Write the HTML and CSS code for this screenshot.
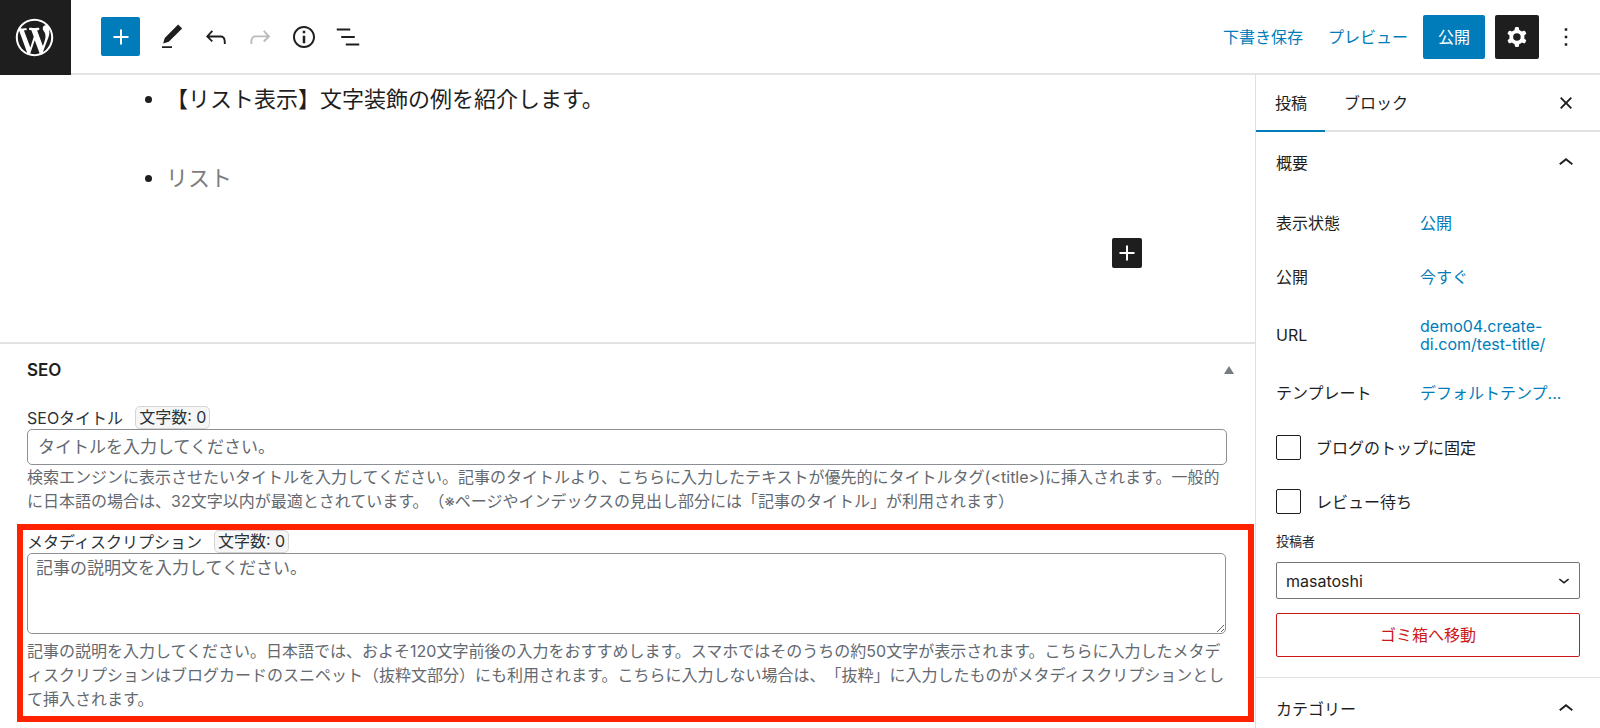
FILE: index.html
```html
<!DOCTYPE html>
<html lang="ja">
<head>
<meta charset="utf-8">
<title>投稿の編集</title>
<link rel="stylesheet" href="styles.css">
</head>
<body>
<div class="app">
  <header class="topbar">
    <a class="logo" href="#" aria-label="WordPress">
      <svg viewBox="-2 -2 24 24"><path d="M20 10c0-5.51-4.49-10-10-10C4.48 0 0 4.49 0 10c0 5.52 4.48 10 10 10 5.51 0 10-4.48 10-10zM7.78 15.37L4.37 6.22c.55-.02 1.17-.08 1.17-.08.5-.06.44-1.13-.06-1.11 0 0-1.45.11-2.37.11-.18 0-.37 0-.58-.01C4.12 2.69 6.87 1.11 10 1.11c2.33 0 4.45.87 6.05 2.34-.68-.11-1.65.39-1.65 1.58 0 .74.45 1.36.9 2.1.35.61.55 1.36.55 2.46 0 1.49-1.4 5-1.4 5l-3.03-8.37c.54-.02.82-.17.82-.17.5-.05.44-1.25-.06-1.22 0 0-1.44.12-2.38.12-.87 0-2.33-.12-2.33-.12-.5-.03-.56 1.2-.06 1.22l.92.08 1.26 3.41zM17.41 10c.24-.64.74-1.87.43-4.25.7 1.29 1.05 2.71 1.05 4.25 0 3.29-1.73 6.24-4.4 7.78.97-2.59 1.94-5.2 2.92-7.78zM6.1 18.09C3.12 16.65 1.11 13.53 1.11 10c0-1.3.23-2.48.72-3.59C3.25 10.3 4.67 14.2 6.1 18.09zm4.03-6.63l2.58 6.98c-.86.29-1.76.45-2.71.45-.79 0-1.57-.11-2.29-.33.81-2.38 1.62-4.74 2.42-7.1z"/></svg>
    </a>
    <div class="tools">
      <button class="add" type="button" aria-label="ブロックを追加"><svg viewBox="0 0 24 24"><path d="M18 11.2h-5.2V6h-1.6v5.2H6v1.6h5.2V18h1.6v-5.2H18z"/></svg></button>
      <button class="tool" type="button" aria-label="ツール"><svg viewBox="0 0 24 24"><path d="M20.1 5.1L16.9 2 6.2 12.7l-1.3 4.4 4.5-1.3L20.1 5.1zM4 20.8h8v-1.5H4v1.5z"/></svg></button>
      <button class="tool" type="button" aria-label="元に戻す"><svg viewBox="0 0 24 24"><path d="M18.3 11.7c-.6-.6-1.4-.9-2.3-.9H6.7l2.9-3.3-1.1-1-4.5 5L8.5 16l1-1-2.7-2.7H16c.5 0 .9.2 1.3.5 1 1 1 3.4 1 4.5v.3h1.5v-.2c0-1.5 0-4.3-1.5-5.7z"/></svg></button>
      <button class="tool" type="button" aria-label="やり直す" disabled><svg viewBox="0 0 24 24"><path d="M15.6 6.5l-1.1 1 2.9 3.3H8c-.9 0-1.7.3-2.3.9-1.4 1.5-1.4 4.2-1.4 5.6v.2h1.5v-.3c0-1.1 0-3.5 1-4.5.3-.3.7-.5 1.3-.5h9.2L14.5 15l1.1 1.1 4.6-4.6-4.6-5z"/></svg></button>
      <button class="tool" type="button" aria-label="詳細"><svg viewBox="0 0 24 24"><path d="M12 3.2c-4.8 0-8.8 3.9-8.8 8.8 0 4.8 3.9 8.8 8.8 8.8 4.8 0 8.8-3.9 8.8-8.8 0-4.8-4-8.8-8.8-8.8zm0 16c-4 0-7.2-3.3-7.2-7.2C4.8 8 8 4.8 12 4.8s7.2 3.3 7.2 7.2c0 4-3.2 7.2-7.2 7.2zM11 17h2v-6h-2v6zm0-8h2V7h-2v2z"/></svg></button>
      <button class="tool" type="button" aria-label="リスト表示"><svg viewBox="0 0 24 24"><path d="M13.8 5.2H3v1.5h10.8V5.2zm-3.6 12v1.5H21v-1.5H10.2zm7.2-6H6.6v1.5h10.8v-1.5z"/></svg></button>
    </div>
    <div class="actions">
      <button class="text-button" type="button">下書き保存</button>
      <button class="text-button" type="button">プレビュー</button>
      <button class="publish" type="button">公開</button>
      <button class="settings" type="button" aria-label="設定"><svg viewBox="0 0 24 24"><path fill-rule="evenodd" d="M10.289 4.836A1 1 0 0111.275 4h1.306a1 1 0 01.987.836l.244 1.466c.787.26 1.503.679 2.108 1.218l1.393-.522a1 1 0 011.216.437l.653 1.13a1 1 0 01-.23 1.273l-1.148.944a6.025 6.025 0 010 2.435l1.149.946a1 1 0 01.23 1.272l-.653 1.13a1 1 0 01-1.216.437l-1.394-.522c-.605.54-1.32.958-2.108 1.218l-.244 1.466a1 1 0 01-.987.836h-1.306a1 1 0 01-.986-.836l-.244-1.466a5.995 5.995 0 01-2.108-1.218l-1.394.522a1 1 0 01-1.217-.436l-.653-1.131a1 1 0 01.23-1.272l1.149-.946a6.026 6.026 0 010-2.435l-1.148-.944a1 1 0 01-.23-1.272l.653-1.131a1 1 0 011.217-.437l1.393.522a5.994 5.994 0 012.108-1.218l.244-1.466zM14.929 12a3 3 0 11-6 0 3 3 0 016 0z"/></svg></button>
      <button class="more" type="button" aria-label="オプション"><svg viewBox="0 0 24 24"><path d="M13 19h-2v-2h2v2zm0-6h-2v-2h2v2zm0-6h-2V5h2v2z"/></svg></button>
    </div>
  </header>

  <main class="content">
    <section class="canvas">
      <ul class="list">
        <li>【リスト表示】文字装飾の例を紹介します。</li>
        <li><span class="hint">リスト</span></li>
      </ul>
      <button class="inserter" type="button" aria-label="ブロックを追加"><svg viewBox="0 0 24 24"><path d="M18 11.2h-5.2V6h-1.6v5.2H6v1.6h5.2V18h1.6v-5.2H18z"/></svg></button>
    </section>

    <section class="metabox">
      <div class="metabox-head">
        <h2>SEO</h2>
        <button class="toggle" type="button" aria-label="パネルを閉じる"><svg viewBox="0 0 10 8"><path d="M5 0l5 8H0z"/></svg></button>
      </div>
      <div class="field">
        <div class="field-head"><label for="seo-title">SEOタイトル</label><span class="count">文字数: 0</span></div>
        <input id="seo-title" class="text-input" type="text" placeholder="タイトルを入力してください。">
        <p class="help">検索エンジンに表示させたいタイトルを入力してください。記事のタイトルより、こちらに入力したテキストが優先的にタイトルタグ(&lt;title&gt;)に挿入されます。一般的に日本語の場合は、32文字以内が最適とされています。（※ページやインデックスの見出し部分には「記事のタイトル」が利用されます）</p>
      </div>
      <div class="field highlighted">
        <div class="field-head"><label for="meta-description">メタディスクリプション</label><span class="count">文字数: 0</span></div>
        <textarea id="meta-description" class="text-area" placeholder="記事の説明文を入力してください。"></textarea>
        <p class="help">記事の説明を入力してください。日本語では、およそ120文字前後の入力をおすすめします。スマホではそのうちの約50文字が表示されます。こちらに入力したメタディスクリプションはブログカードのスニペット（抜粋文部分）にも利用されます。こちらに入力しない場合は、「抜粋」に入力したものがメタディスクリプションとして挿入されます。</p>
      </div>
    </section>
  </main>

  <aside class="sidebar">
    <div class="tabs">
      <button class="tab active" type="button">投稿</button>
      <button class="tab" type="button">ブロック</button>
      <button class="close" type="button" aria-label="設定を閉じる"><svg viewBox="0 0 24 24"><path d="M12 13.06l3.712 3.713 1.061-1.06L13.061 12l3.712-3.712-1.06-1.06L12 10.938 8.288 7.227l-1.061 1.06L10.939 12l-3.712 3.712 1.06 1.061L12 13.061z"/></svg></button>
    </div>
    <section class="panel">
      <button class="panel-head" type="button">概要<svg viewBox="0 0 24 24"><path d="M6.5 12.4L12 8l5.5 4.4-.9 1.2L12 10l-4.5 3.6-1-1.2z"/></svg></button>
      <div class="panel-body">
        <dl class="rows">
          <div class="row"><dt>表示状態</dt><dd><a href="#">公開</a></dd></div>
          <div class="row"><dt>公開</dt><dd><a href="#">今すぐ</a></dd></div>
          <div class="row tall"><dt>URL</dt><dd><a class="url" href="#">demo04.create-<br>di.com/test-title/</a></dd></div>
          <div class="row"><dt>テンプレート</dt><dd><a href="#">デフォルトテンプ...</a></dd></div>
        </dl>
        <div class="checks">
          <label class="check"><input type="checkbox">ブログのトップに固定</label>
          <label class="check"><input type="checkbox">レビュー待ち</label>
        </div>
        <label class="author-label" for="author">投稿者</label>
        <div class="select-wrap">
          <select id="author"><option>masatoshi</option></select>
          <svg viewBox="0 0 24 24"><path d="M17.5 11.6L12 16l-5.5-4.4.9-1.2L12 14l4.5-3.6 1 1.2z"/></svg>
        </div>
        <button class="trash" type="button">ゴミ箱へ移動</button>
      </div>
    </section>
    <section class="panel">
      <button class="panel-head" type="button">カテゴリー<svg viewBox="0 0 24 24"><path d="M6.5 12.4L12 8l5.5 4.4-.9 1.2L12 10l-4.5 3.6-1-1.2z"/></svg></button>
    </section>
  </aside>
</div>
</body>
</html>
```
FILE: styles.css
```css
* {
  box-sizing: border-box;
}

body {
  margin: 0;
  background: #fff;
  color: #1e1e1e;
  font: 16px/24px Inter, "Noto Sans CJK JP", sans-serif;
  text-spacing-trim: space-all;
}

h2, p, ul, dl, dd {
  margin: 0;
  padding: 0;
}

button, input, textarea, select {
  font: inherit;
  color: inherit;
  margin: 0;
}

button {
  padding: 0;
  border: 0;
  background: none;
  cursor: pointer;
}

svg {
  display: block;
  width: 30px;
  height: 30px;
  fill: currentColor;
}

a {
  color: #007cba;
  text-decoration: none;
}

.app {
  display: grid;
  grid-template: auto 1fr / 1fr 345px;
  height: 100vh;
  overflow: hidden;
}

/* Top bar */
.topbar {
  grid-column: 1 / -1;
  display: flex;
  justify-content: space-between;
  align-items: stretch;
  height: 75px;
}

.logo {
  display: grid;
  place-items: center;
  width: 71px;
  padding-right: 2px;
  background: #1e1e1e;
  color: #fff;
}

.logo svg {
  width: 45px;
  height: 45px;
}

.tools, .actions {
  display: flex;
  align-items: center;
  border-bottom: 2px solid #e4e4e4;
}

.tools {
  flex: 1;
  padding-left: 30px;
}

.tools button, .actions button {
  display: grid;
  place-items: center;
}

.tools .add {
  width: 39px;
  height: 39px;
  margin-right: 10px;
  border-radius: 2px;
  background: #007cba;
  color: #fff;
}

.tool, .more, .settings {
  width: 44px;
  height: 44px;
}

.tool:disabled {
  color: #bbb;
}

.actions {
  padding-right: 12px;
}

.text-button {
  margin-right: 25px;
  color: #007cba;
}

.text-button + .publish {
  margin-left: -10px;
}

.actions .publish {
  height: 44px;
  margin-right: 10px;
  padding: 0 15px;
  border-radius: 2px;
  background: #007cba;
  color: #fff;
}

.settings {
  margin-right: 5px;
  border-radius: 2px;
  background: #1e1e1e;
  color: #fff;
}

/* Editor */
.content {
  min-width: 0;
  overflow: hidden;
}

.canvas {
  display: flex;
  flex-direction: column;
  padding: 4px 113px 74px 166px;
  border-bottom: 2px solid #e2e2e2;
}

.list {
  display: grid;
  gap: 39px;
  margin-bottom: 40px;
  font-size: 22px;
  line-height: 40px;
}

.hint {
  color: #7d7d7d;
}

.inserter {
  align-self: flex-end;
  border-radius: 2px;
  background: #1e1e1e;
  color: #fff;
}

/* SEO box */
.metabox-head {
  display: flex;
  align-items: center;
  justify-content: space-between;
  height: 52px;
  padding: 0 21px 0 27px;
}

.metabox-head h2 {
  font-size: 17px;
  font-weight: 600;
}

.toggle {
  color: #787c82;
}

.toggle svg {
  width: 10px;
  height: 8px;
}

.field {
  padding: 10px 28px 0 27px;
  color: #2c3338;
}

.field-head {
  display: flex;
  align-items: center;
  gap: 12px;
  height: 23px;
}

.count {
  padding: 0 3px;
  border: 1px solid #d5d5d5;
  border-radius: 5px;
  background: #f6f6f6;
  line-height: 21px;
}

.text-input, .text-area {
  display: block;
  width: 100%;
  border: 1px solid #8c8f94;
  border-radius: 5px;
  background: #fff;
  font-size: 17px;
}

.text-input {
  height: 36px;
  padding: 0 10px;
}

.text-area {
  height: 81px;
  padding: 2px 8px;
  resize: vertical;
}

.text-input::placeholder, .text-area::placeholder {
  color: #646970;
  opacity: 1;
}

.help {
  color: #646970;
}

.highlighted {
  margin: 11px 1px 0 17px;
  padding: 0 22px 5px 4px;
  border: 6px solid #ff2200;
}

.highlighted .help {
  padding-top: 5px;
}

/* Sidebar */
.sidebar {
  overflow: hidden;
  border-left: 1px solid #e0e0e0;
}

.tabs {
  display: flex;
  height: 57px;
  border-bottom: 2px solid #e2e2e2;
}

.tab {
  height: 57px;
  padding: 0 18px 0 19px;
  border-bottom: 2px solid transparent;
}

.tab.active {
  border-bottom-color: #007cba;
}

.close {
  margin: 0 19px 0 auto;
}

.panel {
  border-bottom: 1px solid #e0e0e0;
}

.panel-head {
  display: flex;
  align-items: center;
  justify-content: space-between;
  width: 100%;
  height: 62px;
  padding: 0 19px 0 20px;
}

.panel-body {
  padding: 7px 20px 20px;
}

.rows {
  display: grid;
  gap: 10px;
}

.row {
  display: grid;
  grid-template-columns: 144px 1fr;
  align-items: center;
  height: 44px;
  white-space: nowrap;
}

.row.tall {
  height: 52px;
}

.url {
  display: block;
  line-height: 18px;
}

.checks {
  display: grid;
  gap: 29px;
  margin: 20px 0 18px;
}

.check {
  display: flex;
  align-items: center;
  gap: 15px;
  height: 25px;
}

.check input {
  appearance: none;
  width: 25px;
  height: 25px;
  border: 1px solid #1e1e1e;
  border-radius: 2px;
  background: #fff;
}

.author-label {
  display: block;
  margin-bottom: 12px;
  font-size: 13px;
  line-height: 18px;
}

.select-wrap {
  position: relative;
  margin-bottom: 14px;
}

.select-wrap select {
  display: block;
  appearance: none;
  width: 100%;
  height: 37px;
  padding: 0 9px;
  border: 1px solid #757575;
  border-radius: 2px;
  background: #fff;
}

.select-wrap svg {
  position: absolute;
  top: 7px;
  right: 5px;
  width: 22px;
  height: 22px;
  pointer-events: none;
}

.trash {
  width: 100%;
  height: 44px;
  border: 1px solid #cc1818;
  border-radius: 2px;
  color: #cc1818;
}
```
